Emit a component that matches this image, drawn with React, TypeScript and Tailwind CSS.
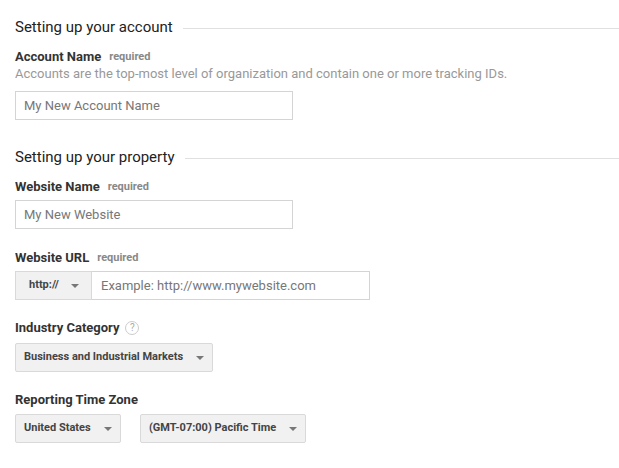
import React from "react";

function Arrow() {
  return <span className="inline-block shrink-0 w-0 h-0 border-l-[4px] border-r-[4px] border-t-[4px] border-l-transparent border-r-transparent border-t-[#777]" />;
}

function Heading({ children, mt }: { children: React.ReactNode; mt: string }) {
  return (
    <div className={`flex items-center -mr-[15px] ${mt}`}>
      <span className="text-[15px] leading-5 text-[#222] whitespace-nowrap">{children}</span>
      <div className="flex-1 ml-[10px] h-px bg-[#e0e0e0] mt-[3px]" />
    </div>
  );
}

function Label({ children, req, mt }: { children: React.ReactNode; req?: boolean; mt: string }) {
  return (
    <div className={`flex items-center leading-4 ${mt}`}>
      <span className="text-[13px] font-bold text-[#333]">{children}</span>
      {req && <span className="ml-[8px] text-[11px] font-bold text-[#888]">required</span>}
    </div>
  );
}

function Drop({ text, w }: { text: string; w: string }) {
  return (
    <div className={`h-[29px] ${w} bg-[#f1f1f1] border border-[#d9d9d9] rounded-[2px] flex items-center justify-between pl-[8px] pr-[8px]`}>
      <span className="text-[11px] font-bold text-[#444] whitespace-nowrap">{text}</span>
      <Arrow />
    </div>
  );
}

export default function App() {
  return (
    <div className="w-[619px] h-[468px] bg-white px-[15px] overflow-hidden" style={{ fontFamily: "Roboto, 'Liberation Sans', sans-serif" }}>
      <div className="pt-[17px]" />
      <Heading mt="">Setting up your account</Heading>
      <Label req mt="mt-[12px]">Account Name</Label>
      <div className="mt-[1px] text-[13px] leading-4 text-[#999]">Accounts are the top-most level of organization and contain one or more tracking IDs.</div>
      <div className="mt-[9px] h-[29px] w-[278px] border border-[#d4d4d4] flex items-center px-[8px] text-[13px] text-[#777]">My New Account Name</div>

      <Heading mt="mt-[27px]">Setting up your property</Heading>
      <Label req mt="mt-[12px]">Website Name</Label>
      <div className="mt-[5px] h-[29px] w-[278px] border border-[#d4d4d4] flex items-center px-[8px] text-[13px] text-[#777]">My New Website</div>

      <Label req mt="mt-[21px]">Website URL</Label>
      <div className="mt-[5px] flex">
        <div className="h-[29px] w-[77px] bg-[#f1f1f1] border border-[#d9d9d9] flex items-center justify-between pl-[13px] pr-[12px]">
          <span className="text-[11px] font-bold text-[#444]">http://</span>
          <Arrow />
        </div>
        <div className="h-[29px] w-[278px] border border-l-0 border-[#d4d4d4] flex items-center px-[9px] text-[13px] text-[#777]">Example: http://www.mywebsite.com</div>
      </div>

      <div className="mt-[20px] flex items-center leading-4">
        <span className="text-[13px] font-bold text-[#333]">Industry Category</span>
        <span className="ml-[6px] w-[14px] h-[14px] rounded-full border border-[#ccc] flex items-center justify-center text-[10px] text-[#aaa] leading-none">?</span>
      </div>
      <div className="mt-[7px]">
        <Drop text="Business and Industrial Markets" w="w-[198px]" />
      </div>

      <Label mt="mt-[20px]">Reporting Time Zone</Label>
      <div className="mt-[6px] flex gap-[19px]">
        <Drop text="United States" w="w-[106px]" />
        <Drop text="(GMT-07:00) Pacific Time" w="w-[166px]" />
      </div>
    </div>
  );
}
